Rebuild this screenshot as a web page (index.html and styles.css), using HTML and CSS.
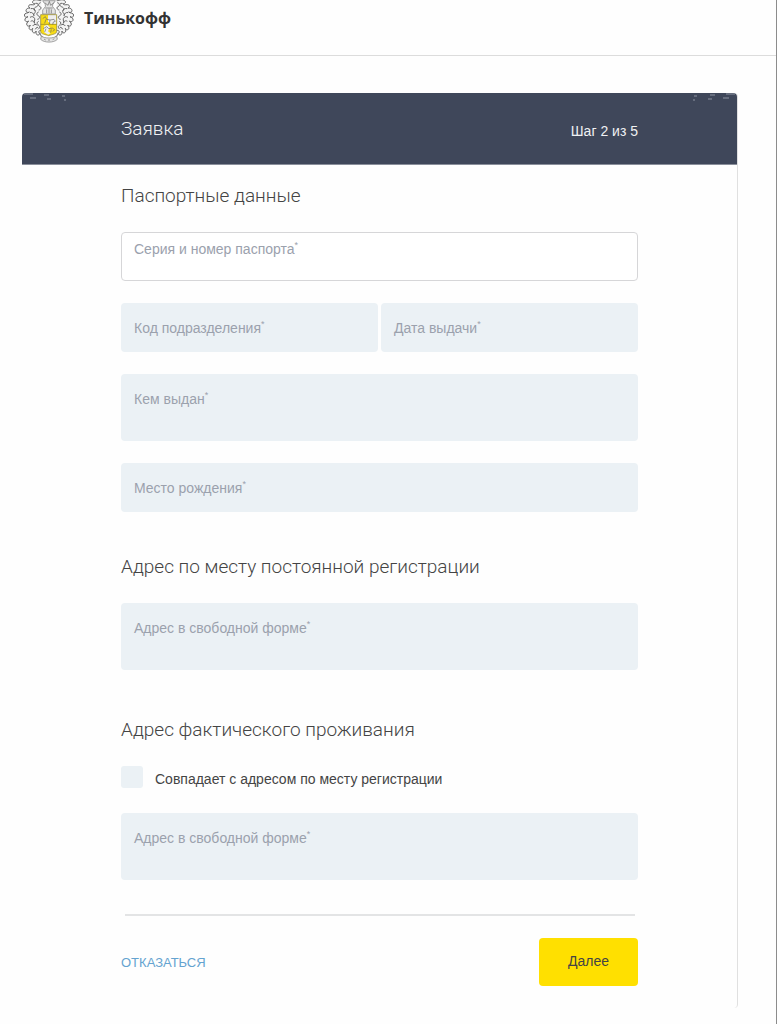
FILE: index.html
```html
<!DOCTYPE html>
<html lang="ru">

<head>
  <meta charset="UTF-8">
  <meta name="viewport" content="width=device-width, initial-scale=1.0">
  <title>Тинькофф</title>
  <link rel="stylesheet" href="styles.css">
</head>

<body>
  <header class="header">
    <svg class="logo" viewBox="0 0 150 129" aria-hidden="true">
      <!-- mantling, left half and its mirror -->
      <defs>
        <g id="mantling">
          <path d="M52 2C42 2 38-4 28 2c-6 5 0 11 6 8-2 6-8 4-14 4-8 0-8 9-2 10-6 0-12 2-12 8 0 5 6 7 10 4-4 4-14 2-15 9-1 6 6 8 11 5-5 3-11 5-9 11 2 5 8 5 11 2-4 4-8 8-5 13 3 4 8 3 10-1-2 5-6 9-2 13 4 3 8 1 9-3-1 6-3 10 2 13 4 2 8-1 8-5 0 6 0 11 5 12 4 1 7-3 6-7 2 6 4 12 9 12" />
          <path d="M36 10c8-2 8 8 2 10s-10 6-6 12M20 26c8-2 14 2 14 8s-8 8-4 14M18 38c6-2 10 2 12 8M18 52c6-4 12-2 14 4s-4 8 0 14M20 64c6-4 10 0 12 6M26 78c4-6 10-6 14-2M34 88c2-6 8-8 12-4M44 98c0-6 4-8 8-6" />
          <path d="M50 8c-8 2-8 10-2 12s2 10-4 10M44 36c-8 2-6 10 0 12s2 10-4 10M44 64c-6 2-6 8 0 12s2 8-2 12" />
        </g>
      </defs>
      <g class="logo-mantling">
        <use href="#mantling" />
        <use href="#mantling" transform="translate(150 0) scale(-1 1)" />
      </g>
      <!-- helmet -->
      <path class="logo-helmet" d="M56 2c4 10 10 8 8 18l-8 10v12h38V30l-8-10c-2-10 4-8 8-18z" />
      <path class="logo-line" d="M62 8l10 8 4-12 4 12 10-8M64 24h22M68 28v12M75 26v14M82 28v12" />
      <!-- shield -->
      <path class="logo-shield" d="M50 44h48v50c0 9-14 9-24 13-10-4-24-4-24-13z" />
      <path class="logo-white" d="M72 45h25v27H80l-8-8z" />
      <path class="logo-white" d="M60 78l10-4 8 8-6 12 8 6-8 4-12-8z" />
      <path class="logo-line" d="M56 56l8-6 4 8 10 2 12-2 4 6-6 2-2 8M66 58l-4 12M78 60l-2 12M58 86l10-6 6 6 12-2 6 6-6 4M66 86l-4 10M82 88l-2 10" />
      <path class="logo-outline" d="M50 44h48v50c0 9-14 9-24 13-10-4-24-4-24-13zM50 73h48" />
      <!-- ribbon -->
      <path class="logo-helmet" d="M52 108c8 8 38 8 46 0l2 10c-10 11-40 11-50 0z" />
      <path class="logo-line" d="M60 117l5 3M72 120h6M86 119l5-3" />
    </svg>
    <span class="brand">Тинькофф</span>
  </header>

  <main class="card">
    <div class="card-header">
      <svg class="spark spark-left" viewBox="0 0 48 10" aria-hidden="true">
        <path d="M2 1h9M8 5h6M22 2h5M25 6h4M40 3h3M42 7h2" />
      </svg>
      <svg class="spark spark-right" viewBox="0 0 48 10" aria-hidden="true">
        <path d="M2 1h9M8 5h6M22 2h5M25 6h4M40 3h3M42 7h2" />
      </svg>
      <h1>Заявка</h1>
      <span class="step">Шаг 2 из 5</span>
    </div>

    <form class="form">
      <h2>Паспортные данные</h2>
      <div class="field active">
        <label for="passport">Серия и номер паспорта<sup>*</sup></label>
        <input type="text" id="passport" required>
      </div>
      <div class="row">
        <div class="field">
          <label for="code">Код подразделения<sup>*</sup></label>
          <input type="text" id="code" required>
        </div>
        <div class="field">
          <label for="issued">Дата выдачи<sup>*</sup></label>
          <input type="text" id="issued" required>
        </div>
      </div>
      <div class="field">
        <label for="issuer">Кем выдан<sup>*</sup></label>
        <textarea id="issuer" required></textarea>
      </div>
      <div class="field">
        <label for="birthplace">Место рождения<sup>*</sup></label>
        <input type="text" id="birthplace" required>
      </div>

      <h2>Адрес по месту постоянной регистрации</h2>
      <div class="field address">
        <label for="regAddress">Адрес в свободной форме<sup>*</sup></label>
        <textarea id="regAddress" required></textarea>
      </div>

      <h2>Адрес фактического проживания</h2>
      <div class="check">
        <input type="checkbox" id="sameAddress">
        <label for="sameAddress">Совпадает с адресом по месту регистрации</label>
      </div>
      <div class="field address">
        <label for="liveAddress">Адрес в свободной форме<sup>*</sup></label>
        <textarea id="liveAddress" required></textarea>
      </div>

      <div class="actions">
        <a class="cancel" href="#">ОТКАЗАТЬСЯ</a>
        <button class="btn" type="submit">Далее</button>
      </div>
    </form>
  </main>
</body>

</html>
```
FILE: styles.css
```css
* {
  margin: 0;
  padding: 0;
  box-sizing: border-box;
}

body {
  font-family: "Liberation Sans", Arial, sans-serif;
  font-size: 14px;
  min-height: 100vh;
  background-color: #fefefe;
  color: #444;
  border-right: 1px solid #8c8c8c;
}

.header {
  display: flex;
  align-items: flex-start;
  gap: 10px;
  height: 56px;
  padding-left: 24px;
  border-bottom: 1px solid #dcdcdc;
}

.logo {
  width: 50px;
  height: 43px;
}

.logo-mantling {
  fill: #f4f4f4;
  stroke: #666;
  stroke-width: 3;
}

.logo-line {
  fill: none;
  stroke: #666;
  stroke-width: 2;
}

.logo-helmet {
  fill: #e4e4e4;
  stroke: #777;
  stroke-width: 2;
}

.logo-shield {
  fill: #f8dc16;
}

.logo-white {
  fill: #eee;
}

.logo-outline {
  fill: none;
  stroke: #8a7f30;
  stroke-width: 2;
}

.brand {
  font-family: "Open Sans", sans-serif;
  font-size: 16px;
  font-weight: 700;
  line-height: 37px;
  color: #333;
}

.card {
  margin: 37px 38px 16px 22px;
  border-right: 1px solid #e0e0e0;
  border-radius: 4px;
}

.card-header {
  position: relative;
  display: flex;
  justify-content: space-between;
  align-items: center;
  height: 72px;
  padding: 0 99px;
  background-color: #3f475a;
  border-bottom: 1px solid #8a8f9b;
  border-radius: 4px 4px 0 0;
  color: #f0f1f3;
}

.card-header h1 {
  font-family: Roboto, sans-serif;
  font-size: 19px;
  font-weight: 300;
}

.step {
  padding-top: 5px;
}

.spark {
  position: absolute;
  top: 0;
  width: 48px;
  height: 10px;
  fill: none;
  stroke: #8e94a1;
  stroke-width: 1;
}

.spark-left {
  left: 0;
}

.spark-right {
  right: 0;
  transform: scaleX(-1);
}

.form {
  padding: 16px 99px 22px;
}

h2 {
  margin-bottom: 21px;
  font-family: Roboto, sans-serif;
  font-size: 19px;
  font-weight: 300;
  line-height: 30px;
}

.field ~ h2 {
  margin-top: 40px;
}

.address ~ h2 {
  margin-top: 45px;
}

/* label and control share one grid cell */
.field {
  display: grid;
  margin-bottom: 22px;
  background-color: #ebf1f5;
  border-radius: 4px;
}

.field label,
.field input,
.field textarea {
  grid-area: 1 / 1;
}

.field label {
  padding: 16px 13px 0;
  line-height: 18px;
  color: #9ba1ad;
  pointer-events: none;
  z-index: 1;
}

.field sup {
  font-size: 9px;
  line-height: 1;
}

.field input,
.field textarea {
  width: 100%;
  height: 49px;
  padding: 16px 13px 0;
  border: 1px solid transparent;
  border-radius: 4px;
  background: transparent;
  font: inherit;
  resize: none;
  outline: none;
}

.field textarea {
  height: 67px;
}

.field.active {
  background-color: #fff;
}

.field.active label {
  padding-top: 8px;
}

.field.active input {
  border-color: #d6d6d8;
}

.row {
  display: grid;
  grid-template-columns: 1fr 1fr;
  gap: 3px;
}

.check {
  display: flex;
  align-items: center;
  gap: 12px;
  margin-bottom: 25px;
}

.check input {
  appearance: none;
  width: 22px;
  height: 22px;
  background-color: #ebf1f5;
  border-radius: 3px;
}

.check label {
  padding-top: 4px;
}

.actions {
  display: flex;
  justify-content: space-between;
  align-items: center;
  margin-top: 34px;
  padding-top: 24px;
  background: linear-gradient(#e3e4e5, #e3e4e5) center top / calc(100% - 7px) 2px no-repeat;
}

.cancel {
  font-size: 13px;
  color: #64a3d0;
  text-decoration: none;
}

.btn {
  width: 99px;
  height: 48px;
  padding-bottom: 3px;
  background-color: #ffe000;
  border: none;
  border-radius: 4px;
  color: #444;
  font: inherit;
  cursor: pointer;
}
```
